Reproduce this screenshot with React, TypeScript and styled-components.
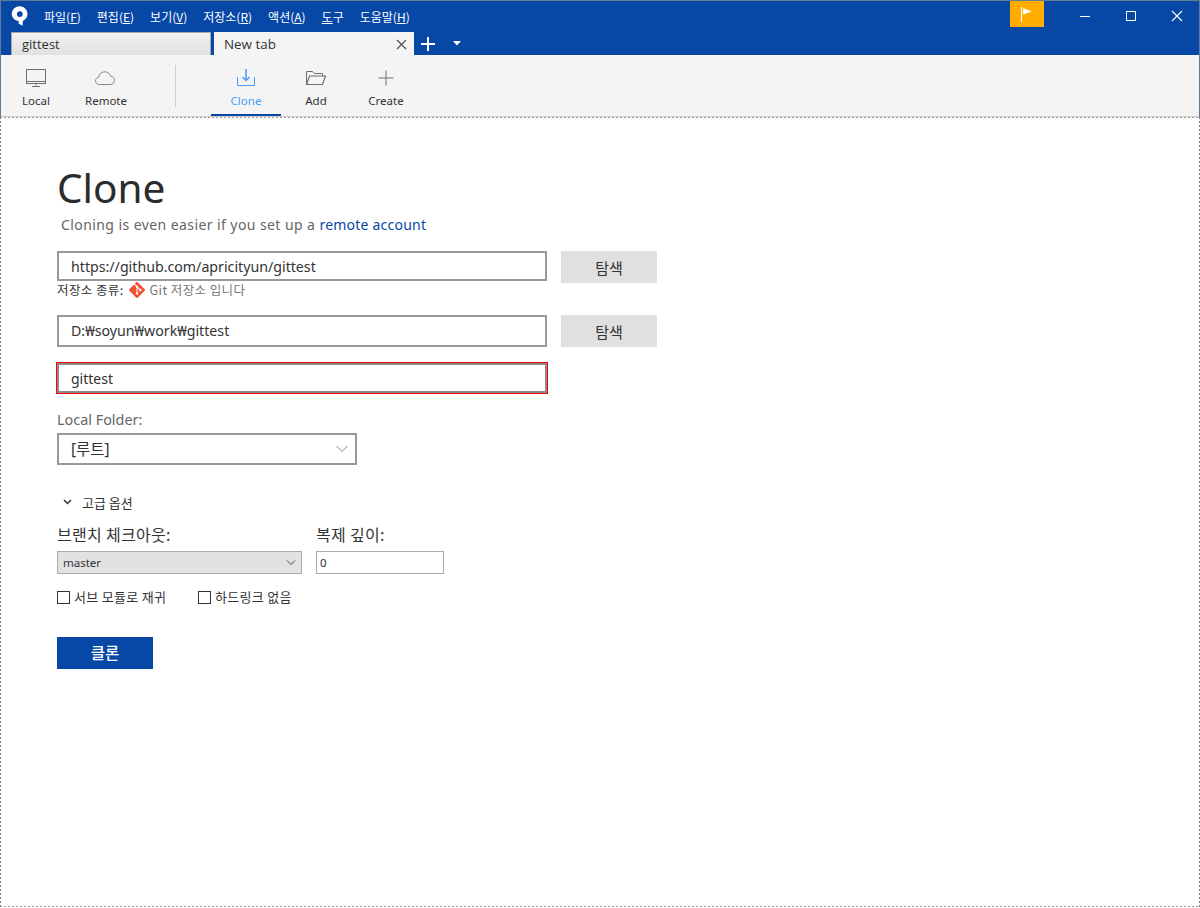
import React from "react";
import styled, { createGlobalStyle } from "styled-components";
import { SiGit } from "react-icons/si";

const Global = createGlobalStyle`
  html, body { margin: 0; padding: 0; background: #fff; }
  body { font-family: "Open Sans", "Noto Sans", "Noto Sans CJK KR", sans-serif; }
  * { box-sizing: border-box; }
`;

const KR = `"Noto Sans CJK KR", "Noto Sans", sans-serif`;
const FRAME = "#5f7d95";

const Win = styled.div`
  width: 1200px; height: 908px; display: flex; flex-direction: column;
  overflow: hidden; background: #fff;
`;
const Chrome = styled.div`
  height: 55px; background: #0747a6; display: flex; flex-direction: column; flex: none;
  border: 1px solid ${FRAME}; border-bottom: none;
`;
const TitleRow = styled.div`
  height: 31px; display: flex; align-items: flex-start; flex: none;
`;
const LogoBox = styled.div`
  width: 43px; height: 28px; padding: 4px 0 0 9px; flex: none;
`;
const Menu = styled.nav`
  display: flex; gap: 16px; height: 30px; align-items: center; font-family: ${KR};
  font-size: 12px; color: #fff; flex: none;
`;
const MenuItem = styled.span`
  white-space: nowrap; u { text-underline-offset: 1px; }
`;
const Spacer = styled.div`flex: 1;`;
const Flag = styled.div`
  width: 34px; height: 26px; background: #ffab00; display: flex; align-items: center; justify-content: center; flex: none;
`;
const WinBtns = styled.div`
  display: flex; width: 155px; padding-left: 18px; flex: none;
`;
const WinBtn = styled.div`
  width: 46px; height: 30px; display: flex; align-items: center; justify-content: center; flex: none;
`;
const TabRow = styled.div`
  height: 23px; display: flex; align-items: flex-end; padding-left: 10px; flex: none;
`;
const TabIdle = styled.div`
  width: 200px; height: 23px; background: linear-gradient(#f2f2f2, #e0e0e0);
  border: 1px solid #a8a8a8; border-bottom: none; font-size: 13px; color: #333; padding: 1px 0 0 10px;
  line-height: 20px; flex: none;
`;
const TabActive = styled.div`
  width: 200px; height: 23px; margin-left: 3px; background: #f4f4f4; font-size: 13.4px; color: #333;
  padding: 1px 0 0 10px; line-height: 22px; display: flex; justify-content: space-between; flex: none;
`;
const TabClose = styled.div`
  width: 26px; display: flex; align-items: center; justify-content: center;
`;
const TabAdd = styled.div`
  width: 28px; height: 23px; display: flex; align-items: center; justify-content: center; flex: none;
`;
const TabMenu = styled.div`
  width: 30px; height: 23px; display: flex; align-items: center; justify-content: center; flex: none;
`;
const Toolbar = styled.div`
  height: 62px; background: #f4f4f4; display: flex; flex: none;
  border: 1px solid ${FRAME}; border-width: 0 1px; box-shadow: inset 0 -1px 0 #d0d0d0;
`;
const ToolGroup = styled.div<{ $pad?: number }>`
  display: flex; padding-left: ${p => p.$pad ?? 0}px;
`;
const ToolBtn = styled.div<{ $active?: boolean }>`
  width: 70px; height: 61px; display: flex; flex-direction: column; align-items: center;
  color: ${p => p.$active ? "#4a9bff" : "#333"};
  border-bottom: 2px solid ${p => p.$active ? "#0747a6" : "transparent"};
`;
const ToolIcon = styled.div`
  height: 24px; margin-top: 11px; display: flex; align-items: center; justify-content: center;
`;
const ToolLabel = styled.div`
  margin-top: 2px; line-height: 17px; font-family: "Noto Sans", sans-serif; font-size: 11.5px;
`;
const Sep = styled.div`
  width: 1px; height: 42px; background: #cfcfcf; margin: 10px 0 0 34px; flex: none;
`;
const dashH = "repeating-linear-gradient(90deg, #999 0 2px, transparent 2px 4px)";
const dashV = `repeating-linear-gradient(180deg, ${FRAME} 0 2px, transparent 2px 4px)`;
const Content = styled.main`
  flex: 1; padding: 46px 0 0 57px;
  background:
    ${dashH} 0 0 / 100% 1px no-repeat,
    ${dashH} 0 calc(100% - 1px) / 100% 1px no-repeat,
    ${dashV} 0 0 / 1px 100% no-repeat,
    ${dashV} 100% 0 / 1px 100% no-repeat,
    #fff;
`;
const Title = styled.h1`
  margin: 0; font-weight: 400; font-size: 40.5px; line-height: 50px; color: #2b2b2b; font-family: "Noto Sans", sans-serif; height: 50px;
`;
const Sub = styled.p`
  margin: 0 0 0 4px; font-size: 14px; line-height: 20px; color: #666; height: 38px; padding-top: 2px;
  font-family: "Noto Sans", sans-serif; letter-spacing: 0.42px;
  a { color: #0747a6; text-decoration: none; letter-spacing: 0.22px; }
`;
const Row = styled.div`
  display: flex; gap: 14px; align-items: flex-start;
`;
const Field = styled.div<{ $h: number; $w?: number; $error?: boolean; $fs?: number }>`
  width: ${p => p.$w ?? 490}px; height: ${p => p.$h}px; border: 2px solid #999; background: #fff;
  font-size: ${p => p.$fs ?? 14.2}px; color: #333; padding: 0 0 ${p => p.$h > 30 ? 2 : 0}px 12px; display: flex; align-items: center;
  font-family: "Noto Sans", "Noto Sans CJK KR", sans-serif; flex: none; position: relative;
  ${p => p.$error ? "outline: 1px solid #f00; border-color: #8a8a8a;" : ""}
`;
const Browse = styled.button`
  width: 96px; height: 32px; background: #e0e0e0; border: none; font-family: ${KR}; font-size: 15px; color: #333; padding: 0;
`;
const RepoType = styled.div`
  height: 33px; margin-top: -1px; display: flex; align-items: flex-start; font-family: ${KR}; font-size: 12.5px; color: #333; line-height: 16px;
  letter-spacing: 0.4px;
`;
const RepoNote = styled.span`
  color: #777; margin-left: 5px;
`;
const GitMark = styled.span`
  display: inline-flex; margin-left: 5px; color: #f05033;
`;
const Gap = styled.div<{ $h: number }>`height: ${p => p.$h}px;`;
const Label = styled.div`
  font-size: 14.4px; color: #666; line-height: 18px; font-family: "Noto Sans", sans-serif; height: 22px;
`;
const Chevron = styled.span`
  position: absolute; right: 7px; top: 9px; display: flex;
`;
const Adv = styled.div`
  height: 22px; margin-top: 27px; padding: 0 0 2px 6px; display: flex; align-items: center; gap: 10px;
  font-family: ${KR}; font-size: 13px; color: #333;
`;
const Cols = styled.div`
  display: flex; gap: 14px; margin-top: 11px;
`;
const Col = styled.div<{ $w: number }>`width: ${p => p.$w}px; flex: none;`;
const ColLabel = styled.div`
  font-family: ${KR}; font-size: 16px; letter-spacing: 0.3px; color: #333; line-height: 18px; height: 26px; white-space: nowrap;
`;
const Select = styled.div`
  width: 245px; height: 23px; background: #e2e2e2; border: 1px solid #ababab; font-size: 11.5px; color: #333;
  padding: 0 2px 0 5px; display: flex; align-items: center; justify-content: space-between; font-family: "Noto Sans", sans-serif;
`;
const SmallInput = styled.div`
  width: 128px; height: 23px; border: 1px solid #ababab; background: #fff; font-size: 11.5px; color: #333;
  padding-left: 3px; display: flex; align-items: center; font-family: "Noto Sans", sans-serif;
`;
const Checks = styled.div`
  display: flex; margin-top: 14px; height: 18px; align-items: center; font-family: ${KR}; font-size: 13px; color: #333; letter-spacing: 0.3px;
`;
const Check = styled.label<{ $w: number }>`
  display: flex; align-items: center; gap: 4px; width: ${p => p.$w}px; padding-bottom: 2px;
`;
const Box = styled.span`
  width: 13px; height: 13px; border: 1px solid #333; background: #fff; flex: none; margin-top: 2px;
`;
const Primary = styled.button`
  width: 96px; height: 32px; background: #0747a6; border: none; color: #fff; font-family: ${KR}; font-size: 15.5px;
  margin-top: 31px; padding: 0 0 2px; font-weight: 500; display: block;
`;

const stroke = { fill: "none", stroke: "#6e6e6e", strokeWidth: 1 };

export default function App() {
  return (
    <Win>
      <Global />
      <Chrome>
        <TitleRow>
          <LogoBox>
            <svg width="20" height="22" viewBox="0 0 20 22">
              <path fillRule="evenodd" fill="#fff" d="M9.500 1.200a7.800 7.800 0 0 1 8 7.800c0 3.200-2 5.800-4.800 7v4.800l-4-2v-2.700C5 15.600 1.700 12.800 1.700 9a7.800 7.800 0 0 1 7.800-7.800Zm.3 5a2.900 2.900 0 1 0 0 5.800 2.900 2.900 0 0 0 0-5.800Z" />
            </svg>
          </LogoBox>
          <Menu>
            <MenuItem>파일(<u>F</u>)</MenuItem>
            <MenuItem>편집(<u>E</u>)</MenuItem>
            <MenuItem>보기(<u>V</u>)</MenuItem>
            <MenuItem>저장소(<u>R</u>)</MenuItem>
            <MenuItem>액션(<u>A</u>)</MenuItem>
            <MenuItem><u>도</u>구</MenuItem>
            <MenuItem>도움말(<u>H</u>)</MenuItem>
          </Menu>
          <Spacer />
          <Flag>
            <svg width="16" height="18" viewBox="0 0 16 18">
              <path d="M2.500 2v15" stroke="#fff" fill="none" />
              <path d="M4 3l9 3.500L4 9.500Z" fill="#fff" />
            </svg>
          </Flag>
          <WinBtns>
            <WinBtn>
              <svg width="12" height="12" viewBox="0 0 12 12"><path d="M1 6.500h10" stroke="#fff" /></svg>
            </WinBtn>
            <WinBtn>
              <svg width="12" height="12" viewBox="0 0 12 12"><rect x="1.500" y="1.500" width="9" height="9" fill="none" stroke="#fff" /></svg>
            </WinBtn>
            <WinBtn>
              <svg width="12" height="12" viewBox="0 0 12 12"><path d="M1 1l10 10M11 1L1 11" stroke="#fff" strokeWidth="1.100" /></svg>
            </WinBtn>
          </WinBtns>
        </TitleRow>
        <TabRow>
          <TabIdle>gittest</TabIdle>
          <TabActive>
            New tab
            <TabClose>
              <svg width="11" height="11" viewBox="0 0 11 11"><path d="M1 1l9 9M10 1l-9 9" stroke="#555" strokeWidth="1.300" /></svg>
            </TabClose>
          </TabActive>
          <TabAdd>
            <svg width="16" height="16" viewBox="0 0 16 16"><path d="M8 1v14M1 8h14" stroke="#fff" strokeWidth="2" /></svg>
          </TabAdd>
          <TabMenu>
            <svg width="8" height="5" viewBox="0 0 8 5"><path d="M0 0h8L4 4.500Z" fill="#fff" /></svg>
          </TabMenu>
        </TabRow>
      </Chrome>
      <Toolbar>
        <ToolGroup>
          <ToolBtn>
            <ToolIcon>
              <svg width="22" height="20" viewBox="0 0 22 20">
                <rect x="1.500" y="1.500" width="19" height="14" {...stroke} />
                <path d="M1.500 13.500h19M11 15.500v2M7 18.500h8" {...stroke} />
              </svg>
            </ToolIcon>
            <ToolLabel>Local</ToolLabel>
          </ToolBtn>
          <ToolBtn>
            <ToolIcon>
              <svg width="22" height="18" viewBox="1 0 22 18">
                <path d="M5.500 15.500C3 15.500 1.500 13.800 1.500 11.800c0-1.900 1.300-3.300 3.200-3.500C5.200 5 7.700 2.800 10.800 2.800c2.800 0 5 1.800 5.700 4.300 2.300.1 4 1.900 4 4.200s-1.800 4.200-4.200 4.200Z" fill="none" stroke="#888" />
              </svg>
            </ToolIcon>
            <ToolLabel>Remote</ToolLabel>
          </ToolBtn>
        </ToolGroup>
        <Sep />
        <ToolGroup $pad={35}>
          <ToolBtn $active>
            <ToolIcon>
              <svg width="20" height="20" viewBox="0 0 20 20">
                <path d="M1.500 9v8.500h17V9" fill="none" stroke="#4a9bff" />
                <path d="M10 1v11M6.500 9l3.500 3.500L13.500 9" fill="none" stroke="#4a9bff" strokeWidth="1.500" />
              </svg>
            </ToolIcon>
            <ToolLabel>Clone</ToolLabel>
          </ToolBtn>
          <ToolBtn>
            <ToolIcon>
              <svg width="22" height="18" viewBox="0 0 22 18">
                <path d="M1.500 15.500V2.500h6l2 2h8v2.500" fill="none" stroke="#6e6e6e" />
                <path d="M1.500 15.500l3-8.500h16l-3 8.500Z" fill="none" stroke="#6e6e6e" strokeWidth="1.200" />
              </svg>
            </ToolIcon>
            <ToolLabel>Add</ToolLabel>
          </ToolBtn>
          <ToolBtn>
            <ToolIcon>
              <svg width="16" height="16" viewBox="0 0 16 16"><path d="M8 .5v15M.5 8h15" stroke="#6e6e6e" /></svg>
            </ToolIcon>
            <ToolLabel>Create</ToolLabel>
          </ToolBtn>
        </ToolGroup>
      </Toolbar>
      <Content>
        <Title>Clone</Title>
        <Sub>Cloning is even easier if you set up a <a>remote account</a></Sub>
        <Row>
          <Field $h={30}>https://github.com/apricityun/gittest</Field>
          <Browse>탐색</Browse>
        </Row>
        <RepoType>
          저장소 종류:
          <GitMark><SiGit size={16} /></GitMark>
          <RepoNote>Git 저장소 입니다</RepoNote>
        </RepoType>
        <Row>
          <Field $h={32}>D:₩soyun₩work₩gittest</Field>
          <Browse>탐색</Browse>
        </Row>
        <Gap $h={16} />
        <Field $h={30} $error $fs={14}>gittest</Field>
        <Gap $h={18} />
        <Label>Local Folder:</Label>
        <Field $h={32} $w={300} $fs={15.5}>
          [루트]
          <Chevron>
            <svg width="12" height="10" viewBox="0 0 12 10"><path d="M.5 2l5.500 5.500L11.500 2" fill="none" stroke="#888" /></svg>
          </Chevron>
        </Field>
        <Adv>
          <svg width="9" height="6" viewBox="0 0 9 6"><path d="M1 1l3.500 3.500L8 1" fill="none" stroke="#333" strokeWidth="1.500" /></svg>
          고급 옵션
        </Adv>
        <Cols>
          <Col $w={245}>
            <ColLabel>브랜치 체크아웃:</ColLabel>
            <Select>
              master
              <svg width="16" height="8" viewBox="0 0 16 8"><path d="M4 1.500l4 4 4-4" fill="none" stroke="#444" /></svg>
            </Select>
          </Col>
          <Col $w={128}>
            <ColLabel>복제 깊이:</ColLabel>
            <SmallInput>0</SmallInput>
          </Col>
        </Cols>
        <Checks>
          <Check $w={141}><Box />서브 모듈로 재귀</Check>
          <Check $w={110}><Box />하드링크 없음</Check>
        </Checks>
        <Primary>클론</Primary>
      </Content>
    </Win>
  );
}
